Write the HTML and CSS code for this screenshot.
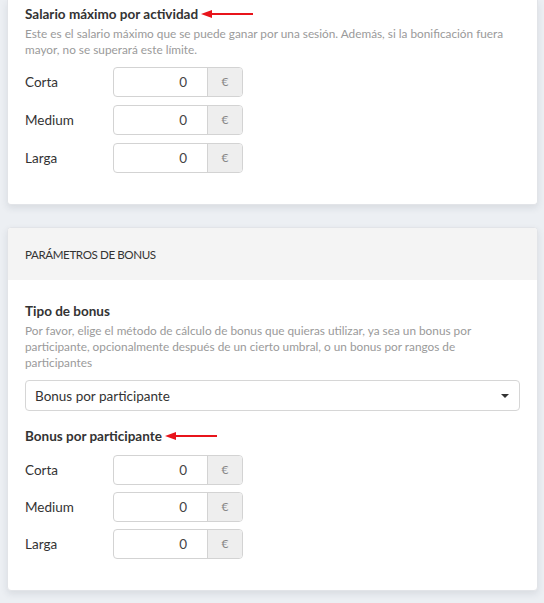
FILE: index.html
```html
<!DOCTYPE html>
<html lang="es">
<head>
<meta charset="utf-8">
<link rel="stylesheet" href="styles.css">
</head>
<body>
<div class="page">
  <section class="card card-top">
    <div class="card-body first">
      <h3 class="field-title">Salario máximo por actividad
        <svg class="arrow" width="54" height="10" viewBox="0 0 54 10"><path d="M12 5 H53" stroke="#e8141b" stroke-width="2"/><path d="M1 5 L12 1 L12 9 Z" fill="#e8141b"/></svg>
      </h3>
      <p class="help">Este es el salario máximo que se puede ganar por una sesión. Además, si la bonificación fuera mayor, no se superará este límite.</p>
      <div class="rows">
        <div class="row"><span class="label">Corta</span><div class="input-group"><span class="value">0</span><span class="addon">€</span></div></div>
        <div class="row"><span class="label">Medium</span><div class="input-group"><span class="value">0</span><span class="addon">€</span></div></div>
        <div class="row"><span class="label">Larga</span><div class="input-group"><span class="value">0</span><span class="addon">€</span></div></div>
      </div>
    </div>
  </section>
  <section class="card">
    <header class="card-header">PARÁMETROS DE BONUS</header>
    <div class="card-body second">
      <h3 class="field-title">Tipo de bonus</h3>
      <p class="help">Por favor, elige el método de cálculo de bonus que quieras utilizar, ya sea un bonus por participante, opcionalmente después de un cierto umbral, o un bonus por rangos de participantes</p>
      <div class="select"><span>Bonus por participante</span><span class="caret"></span></div>
      <h3 class="field-title sub">Bonus por participante
        <svg class="arrow" width="54" height="10" viewBox="0 0 54 10"><path d="M12 5 H53" stroke="#e8141b" stroke-width="2"/><path d="M1 5 L12 1 L12 9 Z" fill="#e8141b"/></svg>
      </h3>
      <div class="rows rows-sub">
        <div class="row"><span class="label">Corta</span><div class="input-group"><span class="value">0</span><span class="addon">€</span></div></div>
        <div class="row"><span class="label">Medium</span><div class="input-group"><span class="value">0</span><span class="addon">€</span></div></div>
        <div class="row"><span class="label">Larga</span><div class="input-group"><span class="value">0</span><span class="addon">€</span></div></div>
      </div>
    </div>
  </section>
</div>
</body>
</html>
```
FILE: styles.css
```css
* { box-sizing: border-box; }
html, body { margin: 0; padding: 0; }
body {
  background: #eceff3;
  font-family: Lato, "Open Sans", sans-serif;
  color: #333;
  height: 603px;
  overflow: hidden;
}
.page {
  display: flex;
  flex-direction: column;
  gap: 22px;
  padding: 0 6px 0 7px;
}
.card {
  background: #fff;
  border: 1px solid #e2e4e8;
  border-radius: 4px;
  box-shadow: 0 3px 7px rgba(40, 50, 70, 0.10);
  overflow: hidden;
}
.card-top {
  border-top: none;
  border-radius: 0 0 4px 4px;
}
.card-header {
  background: #f4f4f4;
  height: 52px;
  display: flex;
  align-items: center;
  padding: 0 17px;
  font-size: 11.6px;
  color: #333;
  letter-spacing: -0.4px;
}
.card-body { padding: 0 17px 31px; }
.card-body.first { padding-top: 5px; }
.card-body.second { padding-top: 22px; }
.field-title {
  margin: 0;
  font-size: 13.5px;
  line-height: 18px;
  font-weight: 700;
  color: #333;
  display: flex;
  align-items: center;
}
.field-title .arrow { margin-left: 2px; }
.field-title.sub { margin-top: 16px; }
.help {
  margin: 3px 0 0;
  font-size: 11.8px;
  line-height: 16px;
  color: #9a9a9a;
}
.rows {
  margin-top: 9px;
  display: flex;
  flex-direction: column;
  gap: 8px;
}
.rows-sub { margin-top: 10px; gap: 7px; }
.row {
  display: grid;
  grid-template-columns: 88px 130px;
  align-items: center;
}
.label { font-size: 13.5px; color: #333; }
.input-group {
  display: flex;
  height: 30px;
  border: 1px solid #d3d3d3;
  border-radius: 4px;
  overflow: hidden;
}
.value {
  flex: 1;
  text-align: right;
  padding-right: 20px;
  line-height: 28px;
  font-size: 13.5px;
  color: #444;
}
.addon {
  width: 35px;
  background: #eeeeee;
  border-left: 1px solid #d3d3d3;
  text-align: center;
  line-height: 28px;
  font-size: 12px;
  color: #888;
}
.select {
  margin-top: 9px;
  height: 31px;
  border: 1px solid #d6d6d6;
  border-radius: 4px;
  display: flex;
  align-items: center;
  justify-content: space-between;
  padding: 0 10px 0 9px;
  font-size: 13.5px;
  color: #333;
}
.caret {
  width: 0;
  height: 0;
  border-left: 4px solid transparent;
  border-right: 4px solid transparent;
  border-top: 4px solid #333;
}
```
